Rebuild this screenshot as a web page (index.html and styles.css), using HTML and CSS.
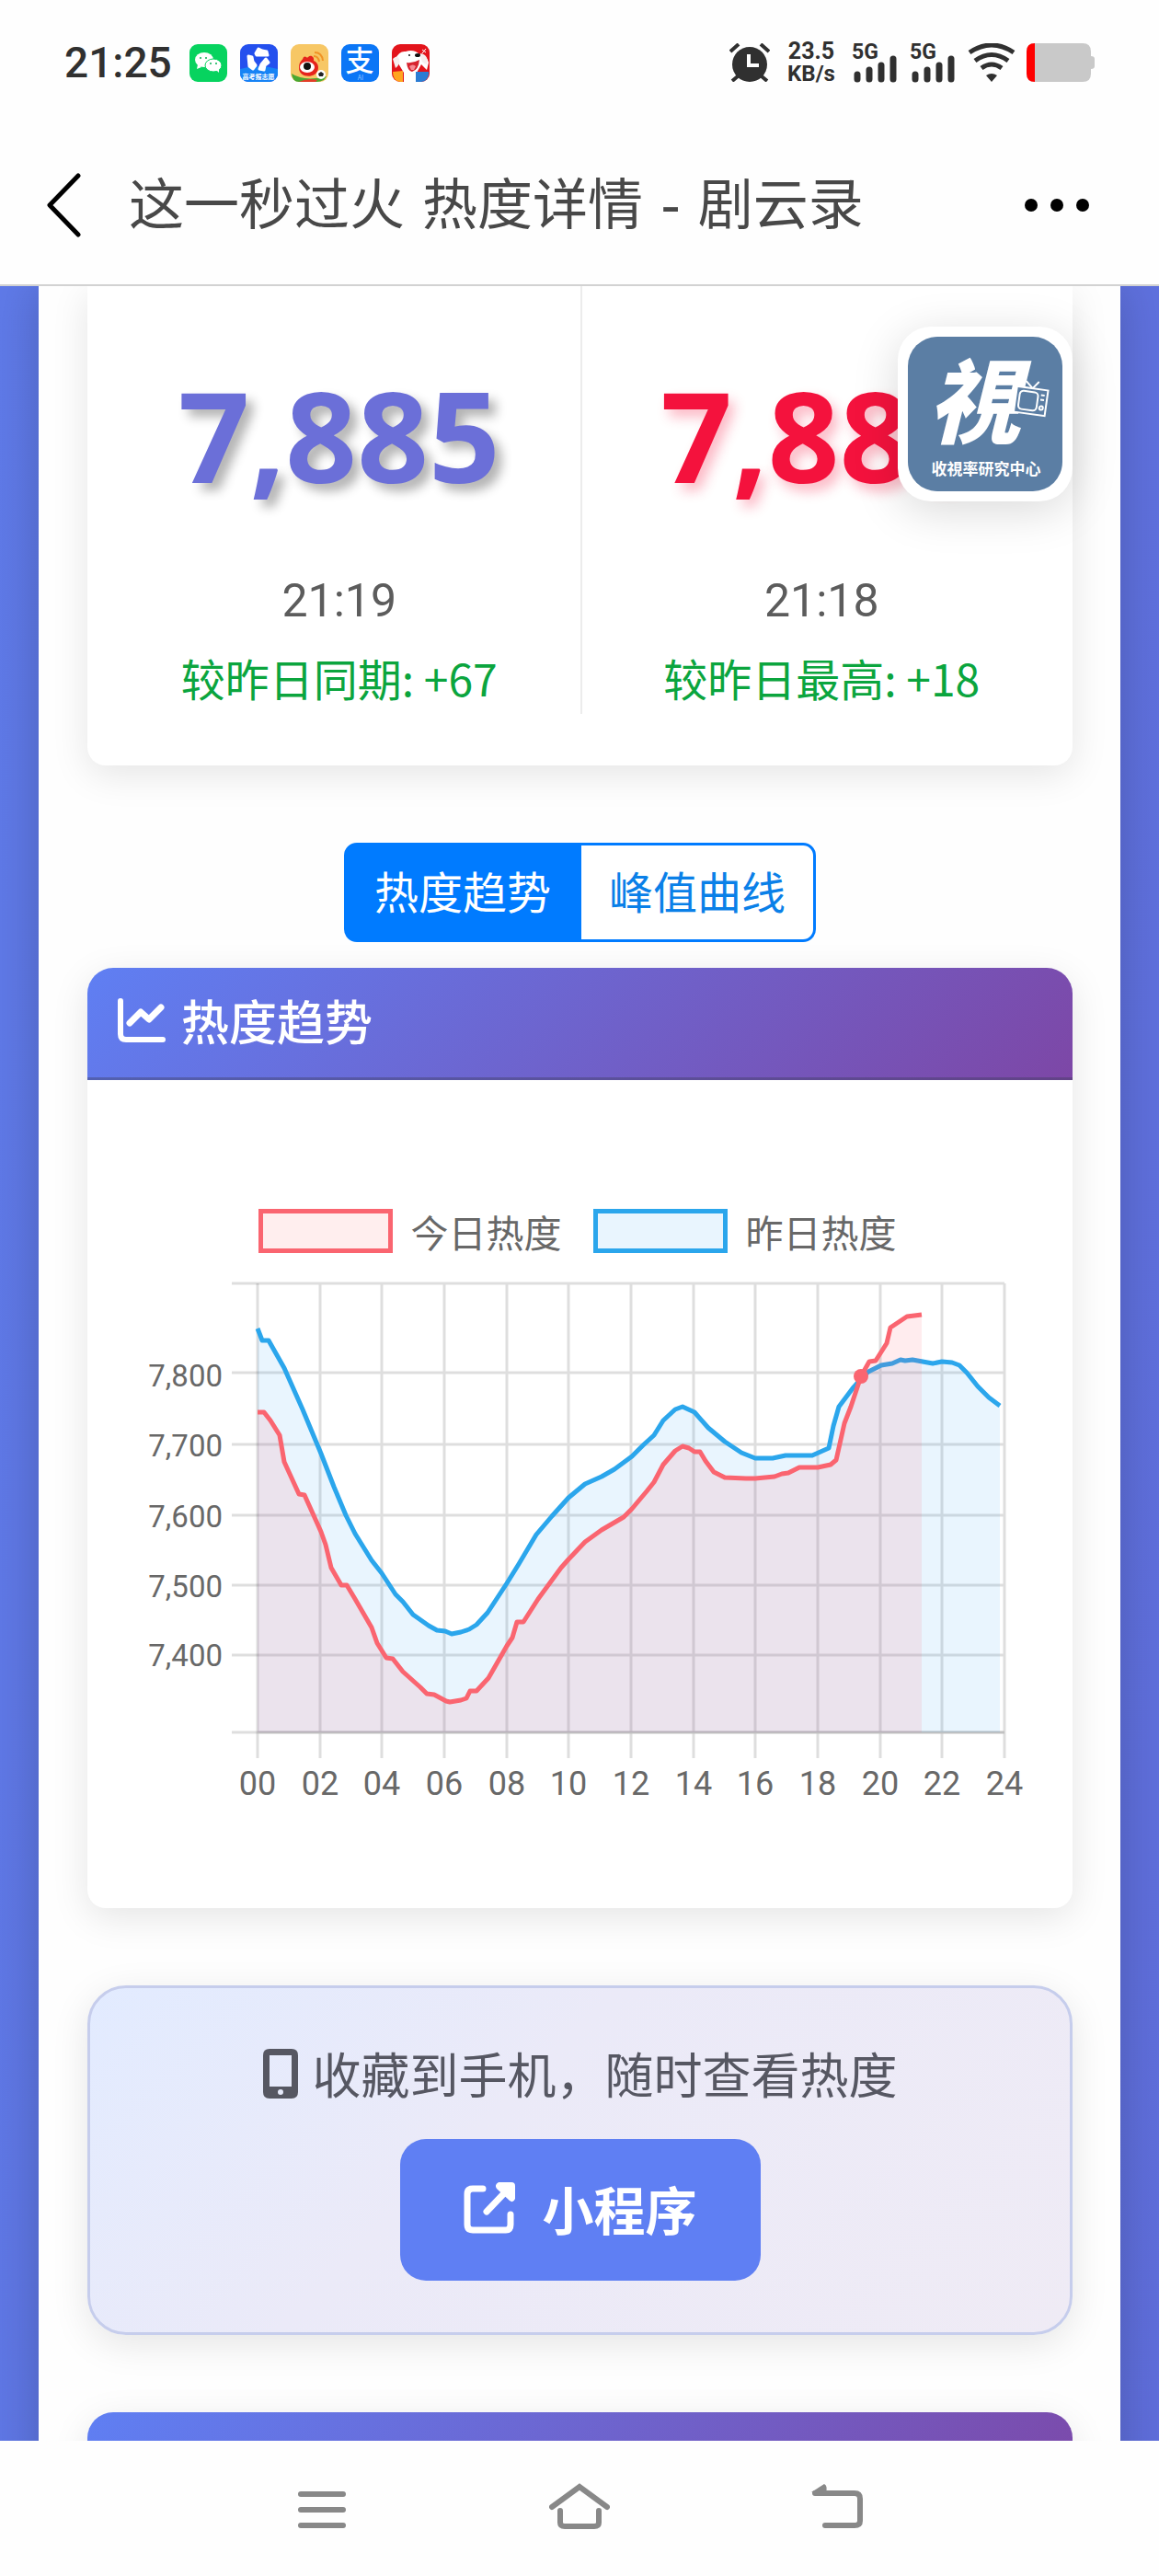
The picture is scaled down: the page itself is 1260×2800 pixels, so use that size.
FILE: index.html
```html
<!DOCTYPE html>
<html lang="zh-CN">
<head>
    <meta charset="UTF-8">
    <meta name="viewport" content="width=device-width, initial-scale=1.0">
    <title>这一秒过火 热度详情 - 剧云录</title>
    <link rel="stylesheet" href="styles.css">
</head>
<body>
    <div class="status-bar">
        <span class="clock">21:25</span>
        <div class="app-icons">
            <svg viewBox="0 0 41 41">
                <rect width="41" height="41" rx="9" fill="#07d35f"/>
                <ellipse cx="16" cy="17" rx="10" ry="8" fill="#fff"/>
                <path d="M9 22l-1 5 5-2z" fill="#fff"/>
                <ellipse cx="26" cy="23" rx="9" ry="7" fill="#fff" stroke="#07d35f"/>
                <path d="M29 28l3 3v-5z" fill="#fff"/>
                <g fill="#07b050"><circle cx="12" cy="15" r="1"/><circle cx="18" cy="15" r="1"/><circle cx="23" cy="21" r="1"/><circle cx="29" cy="21" r="1"/></g>
            </svg>
            <svg viewBox="0 0 41 41">
                <rect width="41" height="41" rx="9" fill="#2450ee"/>
                <path d="M0 27q20-6 41 0v5a9 9 0 0 1-9 9H9a9 9 0 0 1-9-9z" fill="#1783f5"/>
                <g fill="#fff" stroke="#fff" stroke-width="3" stroke-linejoin="round">
                    <path d="M17 10l3-5 4 2 5 1 1 4H18z"/>
                    <path d="M9 13l4 1 1 5 3 4-3 4-4-3z"/>
                    <path d="M28 16l3 4-4 3-1 5-5-1 2-5z"/>
                </g>
                <text x="20" y="38" class="tiny-label">高考报志愿</text>
            </svg>
            <svg viewBox="0 0 41 41">
                <rect width="41" height="41" rx="9" fill="#f7c765"/>
                <path d="M1 32q14 9 38 3l-3 4q-4 2-8 2H9q-7 0-8-9z" fill="#4aa832"/>
                <path d="M9 41q10-5 20-2l-2 2z" fill="#e33d27"/>
                <path d="M9 26c0-8 4-8 5-12 3-2 3 2 5 0 3-3 7 0 6 4 6 2 7 11 1 15-7 4-17 1-17-7z" fill="#e5231c"/>
                <ellipse cx="18" cy="25" rx="8" ry="6" fill="#fff"/>
                <circle cx="18" cy="24" r="4" fill="#111"/>
                <path d="M25 13q5 0 6 6M26 9q8 0 9 9" fill="none" stroke="#f09325" stroke-width="2"/>
                <circle cx="33" cy="33" r="5" fill="#fff"/>
                <path d="M33 30l3 2-1 3h-4l-1-3z" fill="#222"/>
            </svg>
            <svg viewBox="0 0 41 41">
                <rect width="41" height="41" rx="9" fill="#0b76f6"/>
                <text x="20" y="29" class="alipay-mark">支</text>
                <text x="21" y="39" class="tiny-label faint">AI</text>
            </svg>
            <svg viewBox="0 0 41 41">
                <rect width="41" height="41" rx="9" fill="#e3141b"/>
                <path d="M4 16q4-9 11-8 9-3 15 3 8 0 10 9l-2 8-6-6-5 9v10H13V31z" fill="#fff"/>
                <path d="M1 16q5-5 7 0t-4 10zM31 10q9 1 7 12-7-1-7-12z" fill="#f6eeee"/>
                <path d="M16 20q7 1 14-3-1 11-8 13-5-1-6-10z" fill="#d7232e"/>
                <path d="M19 24q4-3 7 0l-2 4h-3z" fill="#f58a93"/>
                <ellipse cx="28" cy="12" rx="3" ry="2" fill="#111"/>
                <circle cx="19" cy="12" r="1" fill="#111"/>
                <path d="M1 30l11-1v12H9q-8-1-8-11z" fill="#ffa520"/>
                <path d="M26 30h14v3q-1 7-8 8h-6z" fill="#2b7cd3"/>
                <path d="M33 6l4 3m0-4l-4 5" stroke="#fff"/>
            </svg>
        </div>
        <div class="system-icons">
            <svg class="alarm" viewBox="0 0 44 42">
                <circle cx="22" cy="23" r="19" fill="#303030"/>
                <path d="M1 9l9-8M34 1l9 8M9 36l-6 5M35 36l6 5" stroke="#303030" stroke-width="4"/>
                <path d="M21 12v12h11" fill="none" stroke="#fff" stroke-width="4"/>
            </svg>
            <div class="net-speed"><span>23.5</span><span>KB/s</span></div>
            <div class="signal">
                <span>5G</span>
                <svg viewBox="0 0 48 30"><path d="M4 21v5M17 16v10M30 11v15M43 4v22" stroke="#303030" stroke-width="7" stroke-linecap="round"/></svg>
            </div>
            <div class="signal">
                <span>5G</span>
                <svg viewBox="0 0 48 30"><path d="M4 21v5M17 16v10M30 11v15M43 4v22" stroke="#303030" stroke-width="7" stroke-linecap="round"/></svg>
            </div>
            <svg class="wifi" viewBox="0 0 52 42">
                <path d="M2 10q24-16 48 0M8 19q18-13 36 0M15 27q11-8 22 0" fill="none" stroke="#303030" stroke-width="5"/>
                <path d="M20 35q6-4 12 0l-6 7z" fill="#303030"/>
            </svg>
            <svg class="battery" viewBox="0 0 74 42">
                <path d="M9 0h52q9 0 9 9v5q4 0 4 3v8q0 3-4 3v5q0 9-9 9H9q-9 0-9-9V9q0-9 9-9z" fill="#c9c9c9"/>
                <path d="M9 0v42q-9 0-9-9V9q0-9 9-9z" fill="#f00"/>
            </svg>
        </div>
    </div>

    <header class="nav-bar">
        <button class="icon-button" aria-label="返回">
            <svg class="chevron" viewBox="0 0 38 70"><path d="M35 3L4 35l31 32" fill="none" stroke="#000" stroke-width="5" stroke-linecap="round" stroke-linejoin="round"/></svg>
        </button>
        <h1>这一秒过火 热度详情 - 剧云录</h1>
        <button class="icon-button" aria-label="更多">
            <svg class="dots" viewBox="0 0 70 14"><circle cx="7" cy="7" r="7"/><circle cx="35" cy="7" r="7"/><circle cx="63" cy="7" r="7"/></svg>
        </button>
    </header>

    <main class="viewport">
        <div class="container">
            <section class="card stats">
                <div class="stat">
                    <div class="stat-value current">7,885</div>
                    <div class="stat-time">21:19</div>
                    <div class="stat-diff">较昨日同期: +67</div>
                </div>
                <div class="stat">
                    <div class="stat-value highest">7,885</div>
                    <div class="stat-time">21:18</div>
                    <div class="stat-diff">较昨日最高: +18</div>
                </div>
            </section>

            <div class="tabs">
                <button class="tab active">热度趋势</button>
                <button class="tab">峰值曲线</button>
            </div>

            <section class="card">
                <h2 class="card-header">
                    <svg viewBox="0 0 52 48">
                        <path d="M3 3v36q0 6 6 6h40" fill="none" stroke="#fff" stroke-width="6" stroke-linecap="round"/>
                        <path d="M13 27l12-12 9 8 13-13" fill="none" stroke="#fff" stroke-width="7" stroke-linecap="round" stroke-linejoin="round"/>
                    </svg>
                    热度趋势
                </h2>
                <div class="chart">
                    <div class="legend">
                        <span class="legend-item"><i class="swatch today"></i>今日热度</span>
                        <span class="legend-item"><i class="swatch yesterday"></i>昨日热度</span>
                    </div>
                    <svg class="plot" viewBox="0 0 1071 588">
                        <g transform="translate(185 13)">
                            <path class="grid" d="M-28 0H812M-28 97H812M-28 175H812M-28 252H812M-28 328H812M-28 404H812M-28 488H812
                                M68 0V516M135 0V516M203 0V516M271 0V516M338 0V516M406 0V516M474 0V516M541 0V516M609 0V516M677 0V516M744 0V516M812 0V516"/>
                            <path class="axis" d="M0 0V516M0 488H812"/>

                            <polygon class="area yesterday" points="0,49 5,62 12,62 29,92 49,137 69,185 83,221 96,252 106,272 124,301 135,315 150,338 158,346 169,360 186,372 195,377 204,378 211,381 221,379 230,376 238,371 250,358 271,326 284,305 303,273 320,253 338,233 356,218 374,210 388,202 407,188 419,176 431,165 441,149 454,137 462,134 475,140 490,157 508,172 526,184 541,190 560,190 574,187 603,187 621,179 626,155 632,134 647,114 656,104 664,96 678,89 690,87 699,83 704,84 712,83 723,85 734,87 744,85 755,86 763,89 771,97 783,112 795,124 807,133 807,488 0,488"/>
                            <polyline class="line yesterday" points="0,49 5,62 12,62 29,92 49,137 69,185 83,221 96,252 106,272 124,301 135,315 150,338 158,346 169,360 186,372 195,377 204,378 211,381 221,379 230,376 238,371 250,358 271,326 284,305 303,273 320,253 338,233 356,218 374,210 388,202 407,188 419,176 431,165 441,149 454,137 462,134 475,140 490,157 508,172 526,184 541,190 560,190 574,187 603,187 621,179 626,155 632,134 647,114 656,104 664,96 678,89 690,87 699,83 704,84 712,83 723,85 734,87 744,85 755,86 763,89 771,97 783,112 795,124 807,133"/>

                            <polygon class="area today" points="0,140 7,140 14,149 24,165 29,194 45,229 51,230 69,270 74,284 80,309 91,328 97,328 106,343 124,374 130,391 140,407 147,408 158,422 177,439 184,446 192,447 205,454 209,455 221,453 227,451 231,443 238,443 251,429 271,394 277,385 282,368 289,368 305,343 330,309 338,300 356,281 374,268 398,254 407,245 423,226 431,216 441,197 454,182 462,177 469,179 475,183 481,183 487,193 496,205 508,211 531,212 541,212 562,210 570,207 577,206 589,200 609,200 623,197 629,192 638,152 645,134 656,101 665,85 672,84 684,65 688,48 706,36 722,34 722,488 0,488"/>
                            <polyline class="line today" points="0,140 7,140 14,149 24,165 29,194 45,229 51,230 69,270 74,284 80,309 91,328 97,328 106,343 124,374 130,391 140,407 147,408 158,422 177,439 184,446 192,447 205,454 209,455 221,453 227,451 231,443 238,443 251,429 271,394 277,385 282,368 289,368 305,343 330,309 338,300 356,281 374,268 398,254 407,245 423,226 431,216 441,197 454,182 462,177 469,179 475,183 481,183 487,193 496,205 508,211 531,212 541,212 562,210 570,207 577,206 589,200 609,200 623,197 629,192 638,152 645,134 656,101 665,85 672,84 684,65 688,48 706,36 722,34"/>
                            <circle class="point" cx="656" cy="101" r="8"/>

                            <g class="labels-y">
                                <text x="-38" y="112">7,800</text>
                                <text x="-38" y="188">7,700</text>
                                <text x="-38" y="265">7,600</text>
                                <text x="-38" y="341">7,500</text>
                                <text x="-38" y="416">7,400</text>
                            </g>
                            <g class="labels-x">
                                <text x="0" y="556">00</text>
                                <text x="68" y="556">02</text>
                                <text x="135" y="556">04</text>
                                <text x="203" y="556">06</text>
                                <text x="271" y="556">08</text>
                                <text x="338" y="556">10</text>
                                <text x="406" y="556">12</text>
                                <text x="474" y="556">14</text>
                                <text x="541" y="556">16</text>
                                <text x="609" y="556">18</text>
                                <text x="677" y="556">20</text>
                                <text x="744" y="556">22</text>
                                <text x="812" y="556">24</text>
                            </g>
                        </g>
                    </svg>
                </div>
            </section>

            <section class="card promo">
                <p class="promo-text">
                    <svg viewBox="0 0 38 54">
                        <path fill-rule="evenodd" d="M7 0h24q7 0 7 7v40q0 7-7 7H7q-7 0-7-7V7q0-7 7-7zM7 7v34h24V7zM19 44a3 3 0 1 0 0 6 3 3 0 0 0 0-6z" fill="#565762"/>
                    </svg>
                    收藏到手机，随时查看热度
                </p>
                <a class="mini-program" href="#">
                    <svg viewBox="0 0 56 56">
                        <path d="M21 7H10q-6 0-6 6v33q0 6 6 6h36q5 0 5-6V35" fill="none" stroke="#fff" stroke-width="7" stroke-linecap="round"/>
                        <path d="M25 32l20-21" stroke="#fff" stroke-width="7" stroke-linecap="round"/>
                        <path d="M38 0h14q4 0 4 4v14q-2 5-6 2L36 7q-3-4 2-7z" fill="#fff"/>
                    </svg>
                    小程序
                </a>
            </section>

            <section class="card">
                <div class="card-header">
                    <svg viewBox="0 0 52 52"><path d="M26 0l26 26H42v26H10V26H0z" fill="#fff"/></svg>
                </div>
            </section>
        </div>

        <a class="floating-logo" href="#" aria-label="收視率研究中心">
            <svg viewBox="0 0 168 168">
                <rect width="168" height="168" rx="32" fill="#5b7ea4"/>
                <text x="72" y="108" class="logo-mark">視</text>
                <g fill="#5b7ea4" stroke="#fff" stroke-width="2" transform="rotate(8 134 68)">
                    <rect x="117" y="56" width="34" height="28"/>
                    <rect x="121" y="60" width="20" height="20" rx="4"/>
                    <path d="M134 56l-8-7M134 56l6-8M144 62h4M144 67h4"/>
                    <circle cx="146" cy="76" r="2"/>
                </g>
                <text x="85" y="150" class="logo-name">收視率研究中心</text>
            </svg>
        </a>
    </main>

    <nav class="system-nav">
        <button class="icon-button" aria-label="最近任务">
            <svg viewBox="0 0 66 50"><path d="M10 12h46M10 29h46M10 46h46" stroke="#888" stroke-width="6" stroke-linecap="round"/></svg>
        </button>
        <button class="icon-button" aria-label="主屏幕">
            <svg viewBox="0 0 66 50"><path d="M3 26L33 4l30 22M12 30v13q0 4 5 4h32q5 0 5-4V30" fill="none" stroke="#888" stroke-width="6" stroke-linecap="round"/></svg>
        </button>
        <button class="icon-button" aria-label="返回上一页">
            <svg viewBox="0 0 66 50"><path d="M9 11h43q6 0 6 6v24q0 5-6 5H20" fill="none" stroke="#888" stroke-width="6" stroke-linecap="round"/><path d="M5 10l14-9q4 2 2 9z" fill="#888"/></svg>
        </button>
    </nav>
</body>
</html>
```

FILE: styles.css
```css
:root {
    --primary-color: #5f7ff3;
    --secondary-color: #7d47a6;
    --link-color: #007bff;
    --today-color: #fa6570;
    --yesterday-color: #2ba6ec;
    --success-color: #0ba53e;
    --text-primary: #484848;
    --text-secondary: #5c5c5c;
    --card-shadow: 0 10px 40px rgba(0, 0, 0, 0.1);
}

* {
    margin: 0;
    padding: 0;
    box-sizing: border-box;
}

body {
    display: flex;
    flex-direction: column;
    height: 100vh;
    font-family: "Noto Sans CJK SC", sans-serif;
    background-color: #fefefe;
    color: var(--text-primary);
}

svg {
    display: block;
    flex-shrink: 0;
}

.icon-button {
    border: none;
    background: none;
    cursor: pointer;
}

/* Status bar */
.status-bar {
    display: flex;
    align-items: center;
    flex-shrink: 0;
    height: 136px;
    padding: 0 70px;
    color: #303030;
    font-family: Roboto, sans-serif;
}

.clock {
    font-size: 46px;
    font-weight: 500;
    line-height: 56px;
}

.app-icons {
    display: flex;
    gap: 14px;
    margin-left: 19px;
}

.app-icons svg {
    width: 41px;
    height: 41px;
}

.tiny-label {
    font: 700 7px "Noto Sans CJK SC", sans-serif;
    fill: #fff;
    text-anchor: middle;
}

.tiny-label.faint {
    font-weight: 400;
    fill: #8fc3ff;
}

.alipay-mark {
    font: 500 31px "Noto Sans CJK SC", sans-serif;
    fill: #fff;
    text-anchor: middle;
}

.system-icons {
    display: flex;
    align-items: center;
    margin-left: auto;
}

.alarm {
    width: 44px;
    height: 42px;
}

.net-speed {
    display: flex;
    flex-direction: column;
    align-items: center;
    width: 52px;
    margin: 0 18px 0 19px;
    font-size: 25px;
    font-weight: 700;
    line-height: 24px;
}

.net-speed span + span {
    font-size: 24px;
}

.signal {
    position: relative;
    width: 51px;
    height: 42px;
    margin-right: 12px;
}

.signal span {
    position: absolute;
    top: -2px;
    left: 0;
    font-size: 23px;
    font-weight: 700;
    line-height: 24px;
}

.signal svg {
    width: 48px;
    height: 30px;
    margin: 13px 0 0 2px;
}

.wifi {
    width: 52px;
    height: 42px;
}

.battery {
    width: 74px;
    height: 42px;
    margin-left: 12px;
}

/* Title bar */
.nav-bar {
    display: flex;
    align-items: center;
    flex-shrink: 0;
    height: 175px;
    padding: 0 76px 0 50px;
    border-bottom: 2px solid #d2d2d2;
}

.nav-bar h1 {
    flex: 1;
    margin-left: 52px;
    font-family: "DejaVu Sans", "Noto Sans CJK SC", sans-serif;
    font-size: 60px;
    font-weight: 400;
    line-height: 80px;
    white-space: nowrap;
}

.chevron {
    width: 38px;
    height: 70px;
}

.dots {
    width: 70px;
    height: 14px;
}

/* Page */
.viewport {
    position: relative;
    flex: 1;
    min-height: 0;
    overflow: hidden;
    background: linear-gradient(100deg, #5f7ae8, #5f6edb);
}

.container {
    margin: 0 42px;
    padding: 0 52px 0 53px;
    background-color: #fefefe;
    box-shadow: 0 0 50px rgba(0, 0, 0, 0.2);
}

.card {
    margin-bottom: 84px;
    border-radius: 28px 28px 20px 20px;
    background-color: #fff;
    box-shadow: var(--card-shadow);
}

.card-header {
    display: flex;
    align-items: center;
    gap: 17px;
    height: 122px;
    padding: 0 33px 6px;
    border-bottom: 3px solid rgba(60, 60, 90, 0.4);
    border-radius: 28px 28px 0 0;
    background: linear-gradient(135deg, var(--primary-color), var(--secondary-color)) border-box;
    color: #fff;
    font-size: 52px;
    font-weight: 500;
    line-height: 60px;
}

.card-header svg {
    width: 52px;
}

.stats {
    display: grid;
    grid-template-columns: 1fr 1fr;
    padding: 0 12px 56px;
    border-radius: 0 0 20px 20px;
}

.stat {
    padding: 82px 0 12px;
    text-align: center;
}

.stat + .stat {
    border-left: 2px solid #ececec;
}

.stat-value {
    font-family: "Noto Sans", sans-serif;
    font-size: 136px;
    font-weight: 700;
    line-height: 160px;
}

.stat-value.current {
    color: #6b6fd8;
    text-shadow: 8px 8px 12px rgba(0, 0, 0, 0.3);
}

.stat-value.highest {
    color: #f4123d;
    text-shadow: 6px 8px 14px rgba(244, 18, 61, 0.3);
}

.stat-time {
    margin-top: 70px;
    color: var(--text-secondary);
    font-family: Roboto, sans-serif;
    font-size: 50px;
    line-height: 60px;
}

.stat-diff {
    margin-top: 25px;
    color: var(--success-color);
    font-size: 48px;
    line-height: 56px;
}

.tabs {
    display: flex;
    justify-content: center;
    margin-bottom: 28px;
}

.tab {
    height: 108px;
    padding: 0 30px 6px;
    border: 3px solid var(--link-color);
    border-radius: 0 14px 14px 0;
    background-color: #fff;
    color: #0a80e8;
    font-family: inherit;
    font-size: 48px;
    cursor: pointer;
}

.tab.active {
    margin-right: -3px;
    border-radius: 14px 0 0 14px;
    background-color: var(--link-color);
    color: #fff;
}

/* Chart */
.chart {
    padding: 140px 0 104px;
}

.legend {
    display: flex;
    justify-content: center;
    gap: 34px;
    padding-right: 6px;
}

.legend-item {
    display: flex;
    align-items: center;
    gap: 20px;
    color: #686868;
    font-size: 41px;
    line-height: 46px;
}

.swatch {
    width: 146px;
    height: 48px;
    border: 5px solid;
}

.swatch.today {
    border-color: var(--today-color);
    background-color: #ffeeee;
}

.swatch.yesterday {
    border-color: var(--yesterday-color);
    background-color: #e9f5fe;
}

.plot {
    width: 100%;
    margin-top: 20px;
}

.grid,
.axis {
    fill: none;
    stroke: rgba(0, 0, 0, 0.13);
    stroke-width: 3;
}

.area.today {
    fill: rgba(255, 80, 100, 0.11);
}

.area.yesterday {
    fill: rgba(43, 156, 246, 0.1);
}

.line {
    fill: none;
    stroke-width: 5;
    stroke-linejoin: round;
}

.line.today {
    stroke: var(--today-color);
}

.line.yesterday {
    stroke: var(--yesterday-color);
}

.point {
    fill: var(--today-color);
}

.labels-x,
.labels-y {
    fill: #686868;
    font-family: Roboto, sans-serif;
    font-size: 36px;
    text-anchor: middle;
}

.labels-y {
    font-size: 33px;
    text-anchor: end;
}

/* Mini program banner */
.promo {
    display: flex;
    flex-direction: column;
    align-items: center;
    gap: 40px;
    padding: 61px 40px 56px;
    border: 3px solid #c6cdec;
    border-radius: 42px;
    background: linear-gradient(135deg, #e2ebff, #ebeaf8 40%, #efebf5);
}

.promo-text {
    display: flex;
    align-items: center;
    gap: 16px;
    color: #565762;
    font-size: 53px;
    line-height: 63px;
    white-space: nowrap;
}

.promo-text svg {
    width: 38px;
}

.mini-program {
    display: flex;
    align-items: center;
    gap: 30px;
    height: 154px;
    padding: 0 69px 4px;
    border-radius: 28px;
    background-color: var(--primary-color);
    color: #fff;
    font-size: 56px;
    font-weight: 700;
    line-height: 64px;
    text-decoration: none;
}

.mini-program svg {
    width: 56px;
}

.floating-logo {
    position: absolute;
    top: 44px;
    right: 94px;
    padding: 11px;
    border-radius: 36px;
    background-color: #fff;
    box-shadow: 0 10px 50px rgba(0, 0, 0, 0.15);
}

.floating-logo svg {
    width: 168px;
    height: 168px;
}

.logo-mark {
    font: italic 900 100px "Noto Sans CJK TC", sans-serif;
    fill: #fff;
    text-anchor: middle;
}

.logo-name {
    font: 700 17px "Noto Sans CJK TC", sans-serif;
    fill: #fff;
    text-anchor: middle;
}

/* Android navigation */
.system-nav {
    display: grid;
    grid-template-columns: repeat(3, 1fr);
    align-items: center;
    justify-items: center;
    flex-shrink: 0;
    height: 147px;
    padding: 0 210px 6px;
}

.system-nav svg {
    width: 66px;
    height: 50px;
}
```
